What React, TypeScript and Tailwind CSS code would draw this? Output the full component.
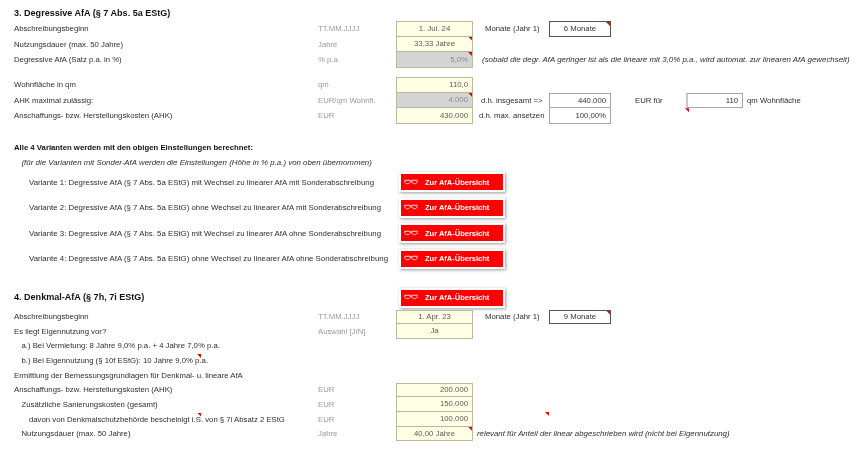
import React from "react";

const Corner = ({ className = "top-0 right-0" }: { className?: string }) => (
  <span className={`absolute w-[4px] h-[4px] bg-[#f00000] [clip-path:polygon(0_0,100%_0,100%_100%)] ${className}`} />
);

type CellProps = {
  children?: React.ReactNode;
  gray?: boolean;
  align?: "right" | "center";
  corner?: boolean;
  first?: boolean;
};

function Cell({ children, gray, align = "right", corner, first }: CellProps) {
  return (
    <div
      className={`relative w-[77px] shrink-0 h-full border-x border-b border-[#b9b9a0] flex items-center ${
        first ? "border-t" : ""
      } ${gray ? "bg-[#d4d4d4] text-[#8a8a8a]" : "bg-[#ffffe6] text-[#5a5a5a]"} ${
        align === "center" ? "justify-center" : "justify-end pr-[4px]"
      }`}
    >
      {children}
      {corner && <Corner />}
    </div>
  );
}

function Box({ children, align = "right", corner, first = true, dark }: { children: React.ReactNode; align?: "right" | "center"; corner?: boolean; first?: boolean; dark?: boolean }) {
  return (
    <div
      className={`relative w-[62px] shrink-0 h-full bg-white border-x border-b ${first ? "border-t" : ""} ${
        dark ? "border-[#555555]" : "border-[#a6a6a6]"
      } flex items-center text-[#333333] ${align === "center" ? "justify-center" : "justify-end pr-[4px]"}`}
    >
      {children}
      {corner && <Corner />}
    </div>
  );
}

function Row({
  label,
  unit,
  indent = 0,
  h = "h-[15.55px]",
  cell,
  children,
}: {
  label: React.ReactNode;
  unit?: string;
  indent?: 0 | 1 | 2;
  h?: string;
  cell?: React.ReactNode;
  children?: React.ReactNode;
}) {
  const pad = indent === 0 ? "pl-0" : indent === 1 ? "pl-[7.5px]" : "pl-[15px]";
  return (
    <div className={`flex items-center ${h}`}>
      <div className={`relative w-[304px] shrink-0 whitespace-nowrap ${pad}`}>{label}</div>
      <div className="w-[78px] shrink-0 text-[#9a9a9a] whitespace-nowrap">{unit}</div>
      {cell ?? <div className="w-[77px] shrink-0" />}
      {children}
    </div>
  );
}

function Glasses() {
  return (
    <svg width="14" height="7" viewBox="0 0 28 14" fill="none" stroke="white" strokeWidth="1.7">
      <path d="M1.500 2.500h10c1 0 1.500.8 1.300 1.800-.5 3-2.300 5.200-5.800 5.200-3.400 0-5.300-2.300-5.800-5.200-.2-1 .2-1.800.3-1.800z" />
      <path d="M16.500 2.500h10c.1 0 .5.800.3 1.800-.5 2.900-2.400 5.200-5.800 5.200-3.500 0-5.300-2.200-5.800-5.200-.2-1 .3-1.800 1.300-1.800z" />
      <path d="M12.800 3.800c.8-.4 1.600-.4 2.400 0" />
    </svg>
  );
}

function AfaButton() {
  return (
    <div className="w-[106px] h-[20px] shrink-0 bg-white p-[2px] shadow-[1px_1px_3px_rgba(0,0,0,0.4)]">
      <div className="h-full bg-[#ff0000] flex items-center pl-[3px] text-white font-bold text-[7.5px] whitespace-nowrap">
        <Glasses />
        <span className="ml-[7px]">Zur AfA-Übersicht</span>
      </div>
    </div>
  );
}

const varianten = [
  "Variante 1: Degressive AfA (§ 7 Abs. 5a EStG) mit Wechsel zu linearer AfA mit Sonderabschreibung",
  "Variante 2: Degressive AfA (§ 7 Abs. 5a EStG) ohne Wechsel zu linearer AfA mit Sonderabschreibung",
  "Variante 3: Degressive AfA (§ 7 Abs. 5a EStG) mit Wechsel zu linearer AfA ohne Sonderabschreibung",
  "Variante 4: Degressive AfA (§ 7 Abs. 5a EStG) ohne Wechsel zu linearer AfA ohne Sonderabschreibung",
];

export default function App() {
  return (
    <div className="w-[862px] h-[450px] overflow-hidden bg-white pl-[14px] pt-[6px] font-['Liberation_Sans',Arial,sans-serif] text-[7.75px] text-[#2e2e2e] blur-[0.35px]">
      {/* 3. Degressive AfA */}
      <div className="h-[15px] flex items-center text-[9.05px] font-bold text-[#111111]">3. Degressive AfA (§ 7 Abs. 5a EStG)</div>

      <Row label="Abschreibungsbeginn" unit="TT.MM.JJJJ" cell={<Cell first align="center">1. Jul. 24</Cell>}>
        <div className="w-[76px] shrink-0 pl-[12px] whitespace-nowrap">Monate (Jahr 1)</div>
        <Box align="center" corner dark>6 Monate</Box>
      </Row>
      <Row label="Nutzungsdauer (max. 50 Jahre)" unit="Jahre" cell={<Cell align="center" corner>33,33 Jahre</Cell>} />
      <Row label="Degressive AfA (Satz p.a. in %)" unit="% p.a." cell={<Cell gray corner>5,0%</Cell>}>
        <div className="pl-[9px] text-[7.92px] italic whitespace-nowrap">(sobald die degr. AfA geringer ist als die lineare mit 3,0% p.a., wird automat. zur linearen AfA gewechselt)</div>
      </Row>

      <div className="h-[9.600px]" />

      <Row label="Wohnfläche in qm" unit="qm" cell={<Cell first>110,0</Cell>} />
      <Row label="AHK maximal zulässig:" unit="EUR/qm Wohnfl." cell={<Cell gray corner>4.000</Cell>}>
        <div className="w-[76px] shrink-0 pl-[8px] whitespace-nowrap">d.h. insgesamt =&gt;</div>
        <Box>440.000</Box>
        <div className="w-[75px] shrink-0 pl-[24px] whitespace-nowrap">EUR für</div>
        <div className="relative w-[57px] h-full bg-white border border-[#a6a6a6] border-l-2 border-l-[#c8c8c8] flex items-center justify-end pr-[4px]">
          110
          <Corner className="-left-[3px] -bottom-[5px]" />
        </div>
        <div className="pl-[4px] whitespace-nowrap">qm Wohnfläche</div>
      </Row>
      <Row label="Anschaffungs- bzw. Herstellungskosten (AHK)" unit="EUR" cell={<Cell>430.000</Cell>}>
        <div className="w-[76px] shrink-0 pl-[6px] whitespace-nowrap">d.h. max. ansetzen</div>
        <Box first={false}>100,00%</Box>
      </Row>

      {/* Varianten */}
      <div className="mt-[16px] h-[15.500px] flex items-center font-bold text-[#111111]">Alle 4 Varianten werden mit den obigen Einstellungen berechnet:</div>
      <div className="h-[15.500px] flex items-center pl-[7.5px] text-[7.88px] italic">(für die Varianten mit Sonder-AfA werden die Einstellungen (Höhe in % p.a.) von oben übernommen)</div>
      <div className="mt-[1.500px] flex flex-col gap-[5.400px]">
        {varianten.map((v) => (
          <div key={v} className="h-[20px] flex items-center">
            <div className="w-[385px] shrink-0 pl-[15px] pt-[1px] text-[7.85px] whitespace-nowrap">{v}</div>
            <AfaButton />
          </div>
        ))}
      </div>

      {/* 4. Denkmal-AfA */}
      <div className="mt-[19.300px] mb-[1.700px] h-[20px] flex items-center">
        <div className="w-[385px] shrink-0 text-[9.05px] font-bold text-[#111111]">4. Denkmal-AfA (§ 7h, 7i EStG)</div>
        <AfaButton />
      </div>

      <Row h="h-[14.65px]" label="Abschreibungsbeginn" unit="TT.MM.JJJJ" cell={<Cell first align="center">1. Apr. 23</Cell>}>
        <div className="w-[76px] shrink-0 pl-[12px] whitespace-nowrap">Monate (Jahr 1)</div>
        <Box align="center" corner dark>9 Monate</Box>
      </Row>
      <Row h="h-[14.65px]" label="Es liegt Eigennutzung vor?" unit="Auswahl [J/N]" cell={<Cell align="center">Ja</Cell>} />
      <Row h="h-[14.65px]" indent={1} label="a.) Bei Vermietung: 8 Jahre 9,0% p.a. + 4 Jahre 7,0% p.a." />
      <Row
        h="h-[14.65px]"
        indent={1}
        label={
          <>
            b.) Bei Eigennutzung (§ 10f EStG): 10 Jahre 9,0% p.a.
            <Corner className="left-[183px] -top-[1px]" />
          </>
        }
      />
      <Row h="h-[14.65px]" label="Ermittlung der Bemessungsgrundlagen für Denkmal- u. lineare AfA" />
      <Row h="h-[14.65px]" label="Anschaffungs- bzw. Herstellungskosten (AHK)" unit="EUR" cell={<Cell first>200.000</Cell>} />
      <Row h="h-[14.65px]" indent={1} label="Zusätzliche Sanierungskosten (gesamt)" unit="EUR" cell={<Cell>150.000</Cell>} />
      <Row
        h="h-[14.65px]"
        indent={2}
        unit="EUR"
        label={
          <>
            davon von Denkmalschutzbehörde bescheinigt i.S. von § 7i Absatz 2 EStG
            <Corner className="left-[183px] -top-[1px]" />
          </>
        }
        cell={<Cell>100.000</Cell>}
      >
        <div className="relative self-stretch">
          <Corner className="left-[72px] top-0" />
        </div>
      </Row>
      <Row h="h-[14.65px]" indent={1} label="Nutzungsdauer (max. 50 Jahre)" unit="Jahre" cell={<Cell align="center" corner>40,00 Jahre</Cell>}>
        <div className="pl-[4px] text-[7.85px] italic whitespace-nowrap">relevant für Anteil der linear abgeschrieben wird (nicht bei Eigennutzung)</div>
      </Row>
    </div>
  );
}
